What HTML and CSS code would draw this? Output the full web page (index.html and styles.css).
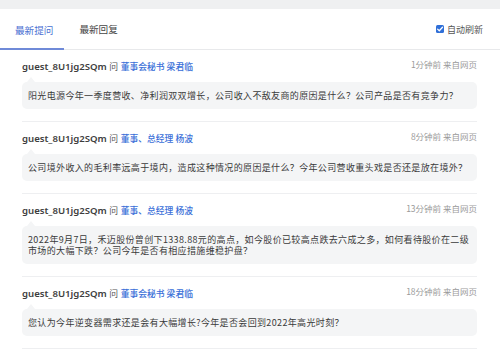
FILE: index.html
```html
<!DOCTYPE html>
<html lang="zh-CN">
<head>
  <meta charset="UTF-8">
  <meta name="viewport" content="width=device-width, initial-scale=1.0">
  <title>最新提问</title>
  <link rel="stylesheet" href="styles.css">
</head>
<body>
  <div class="topband"></div>

  <div class="panel">
    <div class="tabs">
      <div class="tab active">最新提问</div>
      <div class="tab">最新回复</div>
      <label class="refresh">
        <span class="check">
          <svg width="8" height="8" viewBox="0 0 8 8"><path d="M1.6 4.1 L3.3 5.7 L6.5 2.3" fill="none" stroke="#fff" stroke-width="1.3" stroke-linecap="round" stroke-linejoin="round"/></svg>
        </span>
        自动刷新
      </label>
    </div>

    <div class="list">
      <div class="item">
        <div class="meta">
          <div class="who"><span class="name">guest_8U1jg2SQm</span> <span class="ask">问</span> <a class="to">董事会秘书 梁君临</a></div>
          <div class="time">1分钟前 来自网页</div>
        </div>
        <div class="bubble">阳光电源今年一季度营收、净利润双双增长，公司收入不敌友商的原因是什么？公司产品是否有竞争力？</div>
      </div>

      <div class="item">
        <div class="meta">
          <div class="who"><span class="name">guest_8U1jg2SQm</span> <span class="ask">问</span> <a class="to">董事、总经理 杨波</a></div>
          <div class="time">8分钟前 来自网页</div>
        </div>
        <div class="bubble">公司境外收入的毛利率远高于境内，造成这种情况的原因是什么？今年公司营收重头戏是否还是放在境外？</div>
      </div>

      <div class="item">
        <div class="meta">
          <div class="who"><span class="name">guest_8U1jg2SQm</span> <span class="ask">问</span> <a class="to">董事、总经理 杨波</a></div>
          <div class="time">13分钟前 来自网页</div>
        </div>
        <div class="bubble">2022年9月7日，禾迈股份曾创下1338.88元的高点，如今股价已较高点跌去六成之多，如何看待股价在二级市场的大幅下跌？公司今年是否有相应措施维稳护盘？</div>
      </div>

      <div class="item">
        <div class="meta">
          <div class="who"><span class="name">guest_8U1jg2SQm</span> <span class="ask">问</span> <a class="to">董事会秘书 梁君临</a></div>
          <div class="time">18分钟前 来自网页</div>
        </div>
        <div class="bubble">您认为今年逆变器需求还是会有大幅增长?今年是否会回到2022年高光时刻？</div>
      </div>
    </div>
  </div>
</body>
</html>
```

FILE: styles.css
```css
body {
  margin: 0;
  background: #fff;
  font-family: "Noto Sans", "Noto Sans CJK SC", sans-serif;
  color: #333;
}

.topband {
  height: 9px;
  background: #eff0f1;
}

.panel {
  background: #fff;
}

.tabs {
  display: flex;
  align-items: center;
  height: 40px;
  border-bottom: 1px solid #e8e9eb;
}

.tab {
  height: 40px;
  line-height: 40px;
  padding: 0 11px 0 15px;
  font-family: "Noto Sans CJK SC", sans-serif;
  font-size: 9.6px;
  color: #444;
  box-sizing: border-box;
}

.tab.active {
  color: #4a6fd2;
  border-bottom: 2px solid #6f8ad8;
  margin-bottom: -1px;
}

.refresh {
  margin-left: auto;
  margin-right: 17px;
  display: flex;
  align-items: center;
  gap: 3px;
  font-family: "Noto Sans CJK SC", sans-serif;
  font-size: 9px;
  color: #555;
}

.check {
  width: 8px;
  height: 8px;
  border-radius: 1.5px;
  background: #2f6fd8;
  display: flex;
}

.list {
  padding: 0 23px 0 22px;
}

.item {
  padding: 10px 0 12px;
  border-bottom: 1px solid #eeeff1;
}

.meta {
  display: flex;
  align-items: flex-start;
  height: 14px;
}

.who {
  font-size: 9.6px;
  line-height: 14px;
  color: #444;
}

.name {
  font-weight: 600;
  color: #3d3d3d;
}

.ask {
  font-family: "Noto Sans CJK SC", sans-serif;
  font-size: 8.8px;
  color: #555;
}

.to {
  color: #3a6fd8;
  font-family: "Noto Sans CJK SC", sans-serif;
  font-size: 8.8px;
  font-weight: 500;
}

.time {
  margin-left: auto;
  margin-top: -2px;
  font-family: "Noto Sans CJK SC", sans-serif;
  font-size: 8.5px;
  line-height: 12px;
  color: #9a9a9a;
}

.bubble {
  position: relative;
  margin-top: 8px;
  padding: 8px 3px 8px 6px;
  background: #f4f5f6;
  border-radius: 5px;
  font-family: "Noto Sans CJK SC", sans-serif;
  font-size: 9px;
  letter-spacing: 0.35px;
  line-height: 11px;
  color: #3a3a3a;
}

.bubble::before {
  content: "";
  position: absolute;
  left: 5px;
  top: -5px;
  border-left: 4px solid transparent;
  border-right: 4px solid transparent;
  border-bottom: 5px solid #f4f5f6;
}
```
